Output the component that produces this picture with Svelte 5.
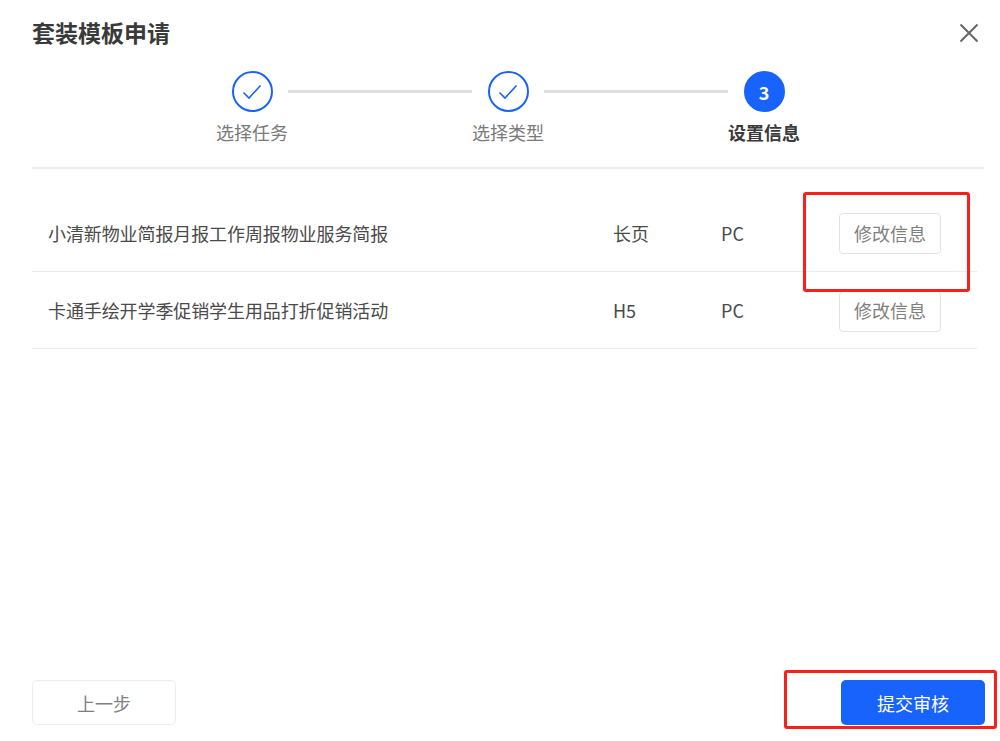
<script>
  const steps = [
    { label: '选择任务', done: true },
    { label: '选择类型', done: true },
    { label: '设置信息', done: false, num: 3 },
  ];
  const rows = [
    { name: '小清新物业简报月报工作周报物业服务简报', kind: '长页', device: 'PC' },
    { name: '卡通手绘开学季促销学生用品打折促销活动', kind: 'H5', device: 'PC' },
  ];
</script>

<div class="dialog">
  <header class="head">
    <h1>套装模板申请</h1>
    <button class="close" aria-label="关闭">
      <svg width="20" height="20" viewBox="0 0 20 20"><path d="M1.5 1.5 18.5 18.5M18.5 1.5 1.5 18.5" stroke="#666" stroke-width="2" fill="none"/></svg>
    </button>
  </header>

  <div class="steps">
    {#each steps as s, i}
      {#if i > 0}<span class="connector"></span>{/if}
      <div class="step" class:active={!s.done}>
        <span class="dot">
          {#if s.done}
            <svg width="20" height="16" viewBox="0 0 20 16"><path d="M1.5 8.5 7 14 18.5 1.5" stroke="#1763fb" stroke-width="1.6" fill="none"/></svg>
          {:else}
            {s.num}
          {/if}
        </span>
        <span class="label">{s.label}</span>
      </div>
    {/each}
  </div>

  <div class="table">
    {#each rows as r}
      <div class="row">
        <span class="name">{r.name}</span>
        <span class="kind">{r.kind}</span>
        <span class="device">{r.device}</span>
        <button class="edit">修改信息</button>
      </div>
    {/each}
  </div>

  <footer class="foot">
    <button class="prev">上一步</button>
    <button class="submit">提交审核</button>
  </footer>

  <span class="mark mark-edit"></span>
  <span class="mark mark-submit"></span>
</div>

<style>
  :global(body) {
    margin: 0;
    background: #fff;
  }
  .dialog {
    position: relative;
    box-sizing: border-box;
    width: 1000px;
    height: 741px;
    padding: 0 15px 16px 32px;
    display: flex;
    flex-direction: column;
    font-family: "Noto Sans CJK SC", "Noto Sans", sans-serif;
    color: #444;
    overflow: hidden;
  }
  button {
    font-family: inherit;
    cursor: pointer;
  }
  .head {
    display: flex;
    justify-content: space-between;
    align-items: center;
    height: 68px;
  }
  h1 {
    margin: 0 0 4px;
    font-size: 23px;
    font-weight: 700;
    color: #3a3a3a;
  }
  .close {
    width: 20px;
    height: 20px;
    margin: 0 6px 2px 0;
    padding: 0;
    border: 0;
    background: none;
    display: flex;
  }
  .steps {
    display: flex;
    justify-content: center;
    height: 101px;
    padding-top: 3px;
    margin-right: 1px;
    border-bottom: 2px solid #ebeeee;
    box-sizing: border-box;
  }
  .step {
    width: 72px;
    display: flex;
    flex-direction: column;
    align-items: center;
  }
  .dot {
    box-sizing: border-box;
    width: 41px;
    height: 41px;
    border: 2px solid #1763fb;
    border-radius: 50%;
    display: flex;
    align-items: center;
    justify-content: center;
    color: #fff;
    font-size: 18px;
    font-weight: 700;
  }
  .active .dot {
    background: #1763fb;
  }
  .label {
    margin-top: 7px;
    font-size: 18px;
    line-height: 26px;
    color: #7a7a7a;
  }
  .active .label {
    color: #3a3a3a;
    font-weight: 700;
  }
  .connector {
    width: 184px;
    height: 3px;
    margin-top: 19px;
    background: #dedede;
  }
  .table {
    margin-top: 25px;
    margin-right: 8px;
  }
  .row {
    display: flex;
    align-items: center;
    height: 77px;
    padding-left: 16px;
    border-bottom: 1px solid #e9eced;
    box-sizing: border-box;
    font-size: 18px;
    color: #4a4a4a;
  }
  .row:first-child {
    height: 78px;
  }
  .name {
    width: 565px;
    letter-spacing: -0.1px;
    white-space: nowrap;
  }
  .kind {
    width: 108px;
  }
  .device {
    width: 118px;
  }
  .edit {
    box-sizing: border-box;
    width: 102px;
    height: 41px;
    margin-top: 2px;
    padding: 0 0 2px;
    background: #fff;
    border: 1px solid #dfe3e8;
    border-radius: 4px;
    font-size: 18px;
    color: #808080;
  }
  .foot {
    margin-top: auto;
    display: flex;
    justify-content: space-between;
  }
  .foot button {
    width: 144px;
    height: 45px;
    padding: 0;
    border-radius: 5px;
    font-size: 18px;
  }
  .prev {
    background: #fff;
    border: 1px solid #eceeef;
    color: #7f7f7f;
  }
  .submit {
    background: #1763fb;
    border: 0;
    color: #fff;
  }
  .mark {
    position: absolute;
    box-sizing: border-box;
    border: 3px solid #f9201c;
    border-radius: 3px;
    pointer-events: none;
  }
  .mark-edit {
    left: 803px;
    top: 192px;
    width: 167px;
    height: 100px;
  }
  .mark-submit {
    left: 784px;
    top: 670px;
    width: 213px;
    height: 59px;
  }
</style>
